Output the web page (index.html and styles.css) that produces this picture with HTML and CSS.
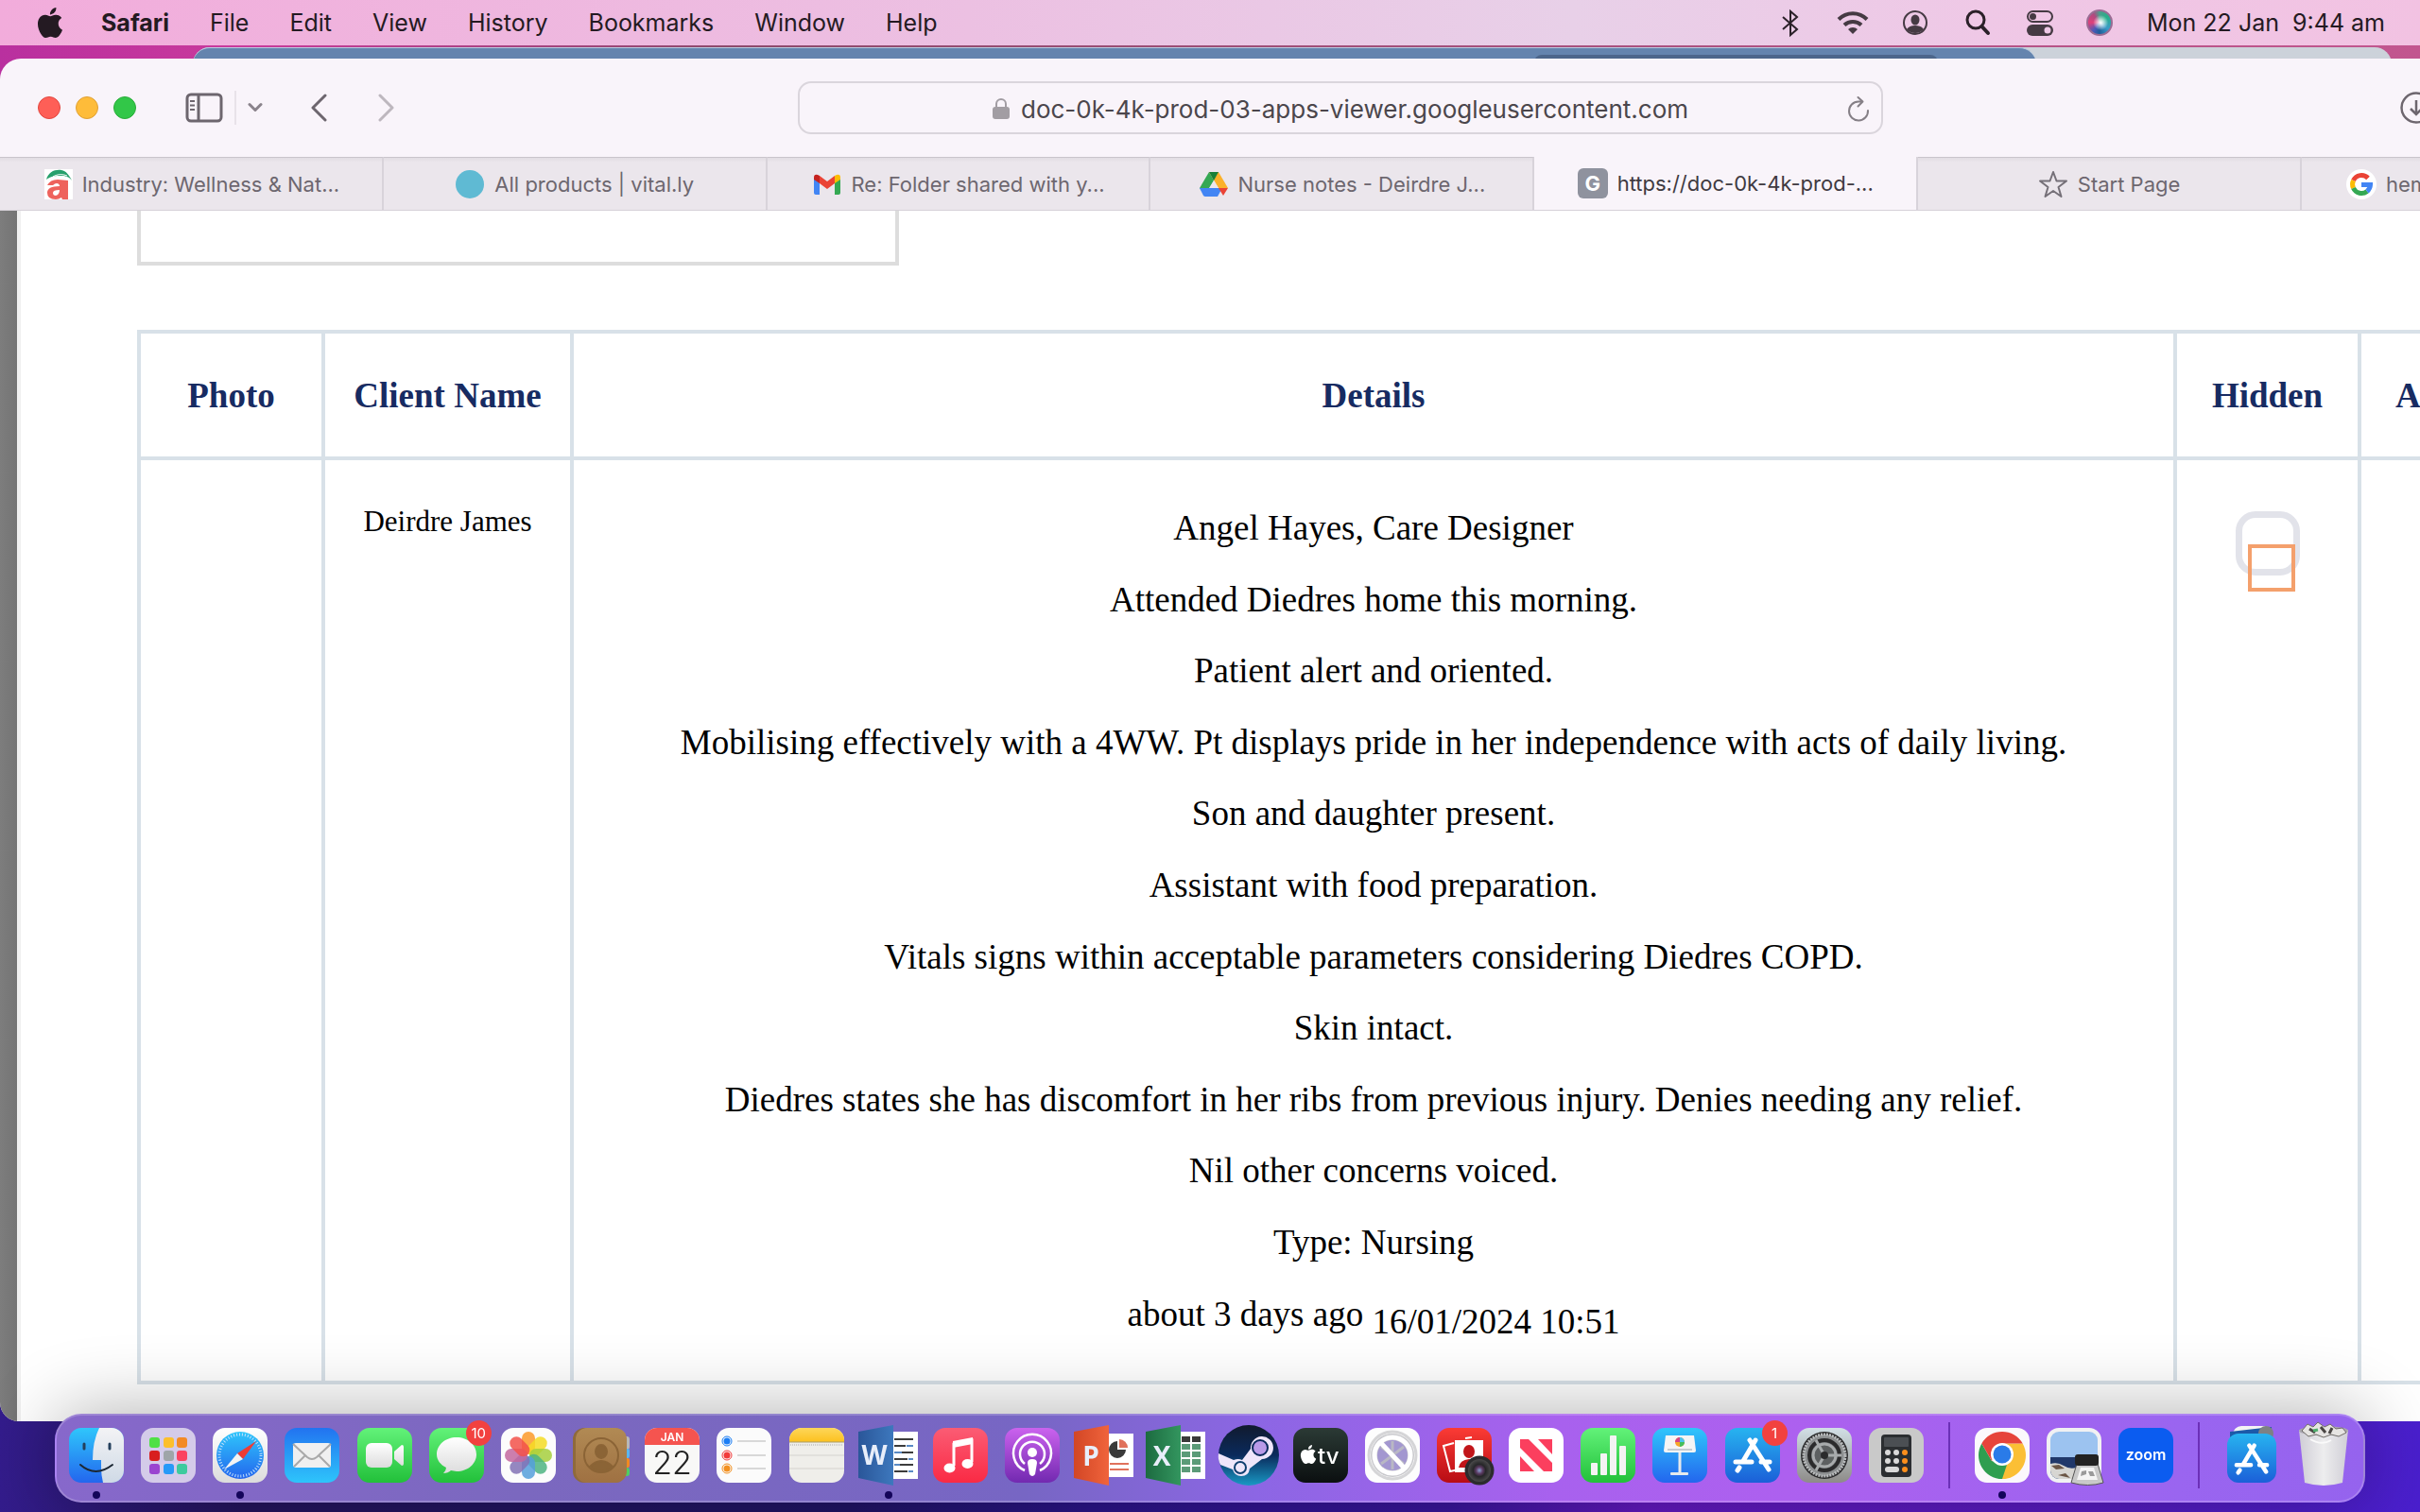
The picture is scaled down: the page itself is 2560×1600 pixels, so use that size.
FILE: index.html
```html
<!DOCTYPE html>
<html lang="en">
<head>
    <meta charset="UTF-8">
    <meta name="viewport" content="width=device-width, initial-scale=1.0">
    <title>Nurse notes</title>
    <link rel="stylesheet" href="styles.css">
</head>
<body>
    <!-- Shared gradients and symbols -->
    <svg class="defs" aria-hidden="true">
        <defs>
            <linearGradient id="blueDown" x2="0" y2="1"><stop offset="0" stop-color="#2fc6fb"/><stop offset="1" stop-color="#2366ee"/></linearGradient>
            <linearGradient id="blueUp" x2="0" y2="1"><stop offset="0" stop-color="#2273f0"/><stop offset="1" stop-color="#2ec5fb"/></linearGradient>
            <linearGradient id="storeBlue" x2="0" y2="1"><stop offset="0" stop-color="#27b4f0"/><stop offset="1" stop-color="#1b5fd8"/></linearGradient>
            <linearGradient id="green" x2="0" y2="1"><stop offset="0" stop-color="#62f279"/><stop offset="1" stop-color="#22c03a"/></linearGradient>
            <linearGradient id="white" x2="0" y2="1"><stop offset="0" stop-color="#ffffff"/><stop offset="1" stop-color="#dcdcdc"/></linearGradient>
            <linearGradient id="face" x2="0" y2="1"><stop offset="0" stop-color="#f3f3f5"/><stop offset="1" stop-color="#cfdae6"/></linearGradient>
            <linearGradient id="pink" x2="0" y2="1"><stop offset="0" stop-color="#fb5c74"/><stop offset="1" stop-color="#fa2a44"/></linearGradient>
            <linearGradient id="purple" x2="0" y2="1"><stop offset="0" stop-color="#cb63ee"/><stop offset="1" stop-color="#7229b0"/></linearGradient>
            <linearGradient id="red" x2="0" y2="1"><stop offset="0" stop-color="#fb3b35"/><stop offset="1" stop-color="#b80c14"/></linearGradient>
            <linearGradient id="black" x2="0" y2="1"><stop offset="0" stop-color="#2b3a35"/><stop offset="1" stop-color="#0b0f10"/></linearGradient>
            <linearGradient id="steam" x2="0" y2="1"><stop offset="0" stop-color="#111a2e"/><stop offset=".5" stop-color="#0a2a5c"/><stop offset="1" stop-color="#1999c4"/></linearGradient>
            <linearGradient id="brown" x2="0" y2="1"><stop offset="0" stop-color="#b18a54"/><stop offset="1" stop-color="#9f7142"/></linearGradient>
            <linearGradient id="yellow" x2="0" y2="1"><stop offset="0" stop-color="#fdd65a"/><stop offset="1" stop-color="#fcc11e"/></linearGradient>
            <linearGradient id="word" x2="1" y2="0"><stop offset="0" stop-color="#2a5699"/><stop offset="1" stop-color="#3d78bd"/></linearGradient>
            <linearGradient id="ppt" x2="1" y2="0"><stop offset="0" stop-color="#d24625"/><stop offset="1" stop-color="#f0643c"/></linearGradient>
            <linearGradient id="excel" x2="1" y2="0"><stop offset="0" stop-color="#1c6b40"/><stop offset="1" stop-color="#33965f"/></linearGradient>
            <linearGradient id="grey" x2="0" y2="1"><stop offset="0" stop-color="#d2e0e6"/><stop offset="1" stop-color="#8d8b88"/></linearGradient>
            <linearGradient id="bin" x2="1" y2="0"><stop offset="0" stop-color="#cfcdd6"/><stop offset=".5" stop-color="#ededee"/><stop offset="1" stop-color="#d0ced6"/></linearGradient>
            <radialGradient id="lens"><stop offset="0" stop-color="#8aa0d0"/><stop offset=".3" stop-color="#5b3a62"/><stop offset=".55" stop-color="#262628"/><stop offset="1" stop-color="#4a4a4a"/></radialGradient>
        </defs>
        <symbol id="apple" viewBox="0 0 24 24"><path d="M12.152 6.896c-.948 0-2.415-1.078-3.96-1.04-2.04.027-3.91 1.183-4.961 3.014-2.117 3.675-.546 9.103 1.519 12.09 1.013 1.454 2.208 3.09 3.792 3.039 1.52-.065 2.09-.987 3.935-.987 1.831 0 2.35.987 3.96.948 1.637-.026 2.676-1.48 3.676-2.948 1.156-1.688 1.636-3.325 1.662-3.415-.039-.013-3.182-1.221-3.22-4.857-.026-3.04 2.48-4.494 2.597-4.559-1.429-2.09-3.623-2.324-4.39-2.376-2-.156-3.675 1.09-4.61 1.09zM15.53 3.83c.843-1.012 1.4-2.427 1.245-3.83-1.207.052-2.662.805-3.532 1.818-.78.896-1.454 2.338-1.273 3.714 1.338.104 2.715-.688 3.559-1.701"/></symbol>
        <symbol id="storeA" viewBox="0 0 58 58"><g stroke="#fff" stroke-width="5" stroke-linecap="round" fill="none"><path d="M26 13L46 44M32 13L19 35M15 42l-2 3M11 36h17M38 36h9"/></g></symbol>
    </svg>

    <header class="menubar">
        <nav class="menus">
            <button class="apple-btn" aria-label="Apple menu"><svg width="32" height="32" fill="#241a22"><use href="#apple"/></svg></button>
            <button class="app-name">Safari</button>
            <button>File</button>
            <button>Edit</button>
            <button>View</button>
            <button>History</button>
            <button>Bookmarks</button>
            <button>Window</button>
            <button>Help</button>
        </nav>
        <div class="status">
            <button aria-label="Bluetooth"><svg width="34" height="34" viewBox="0 0 34 34" fill="none" stroke="#2b2129" stroke-width="2"><path d="M9 11l15 13-7 6V5l7 6L9 24"/></svg></button>
            <button aria-label="Wi-Fi"><svg width="34" height="34" viewBox="0 0 34 34" fill="none" stroke="#453a43" stroke-width="4"><path d="M2 13.500a21 21 0 0 1 30 0M8 19.500a13 13 0 0 1 18 0"/><path d="M17 29l-5-5a7 7 0 0 1 10 0z" fill="#453a43" stroke="none"/></svg></button>
            <button aria-label="User"><svg width="34" height="34" viewBox="0 0 34 34"><circle cx="17" cy="17" r="12" fill="none" stroke="#453a43" stroke-width="2"/><ellipse cx="17" cy="14" rx="4.500" ry="5.500" fill="#453a43"/><path d="M8 24a10 7 0 0 1 18 0a12 12 0 0 1-18 0z" fill="#453a43"/></svg></button>
            <button aria-label="Search"><svg width="34" height="34" viewBox="0 0 34 34" fill="none" stroke="#2b2129"><circle cx="15" cy="14" r="9" stroke-width="3"/><path d="M21.500 21l6.500 7" stroke-width="4" stroke-linecap="round"/></svg></button>
            <button aria-label="Control Centre"><svg width="34" height="34" viewBox="0 0 34 34"><rect x="4" y="5" width="26" height="11" rx="5.500" fill="none" stroke="#453a43" stroke-width="2"/><circle cx="9.500" cy="10.500" r="3.500" fill="#453a43"/><rect x="3" y="19" width="28" height="12" rx="6" fill="#453a43"/><circle cx="25" cy="25" r="3.500" fill="#efc8e6"/></svg></button>
            <button aria-label="Siri"><span class="siri"></span></button>
            <time class="clock">Mon 22 Jan&nbsp; 9:44 am</time>
        </div>
    </header>

    <div class="behind" aria-hidden="true">
        <div class="behind-grey"><div class="behind-blue"><span></span></div></div>
    </div>

    <main class="window">
        <div class="toolbar">
            <div class="lights">
                <button class="light red" aria-label="Close"></button>
                <button class="light amber" aria-label="Minimise"></button>
                <button class="light green" aria-label="Zoom"></button>
            </div>
            <div class="side-btns">
                <button aria-label="Sidebar"><svg width="40" height="32" viewBox="0 0 40 32" fill="none" stroke="#6d666e" stroke-width="3"><rect x="2" y="2" width="36" height="28" rx="4"/><path d="M14 2v28"/><path d="M5 9h5M5 13.500h5M5 18h5" stroke-width="2"/></svg></button>
                <span class="rule"></span>
                <button aria-label="Tab groups"><svg width="16" height="12" viewBox="0 0 16 12" fill="none" stroke="#8a838b" stroke-width="3" stroke-linecap="round" stroke-linejoin="round"><path d="M2 2.500l6 6 6-6"/></svg></button>
            </div>
            <div class="history">
                <button aria-label="Back"><svg width="18" height="30" viewBox="0 0 18 30" fill="none" stroke="#6d666e" stroke-width="3" stroke-linecap="round" stroke-linejoin="round"><path d="M16 2L3 15l13 13"/></svg></button>
                <button aria-label="Forward"><svg width="18" height="30" viewBox="0 0 18 30" fill="none" stroke="#bdb7be" stroke-width="3" stroke-linecap="round" stroke-linejoin="round"><path d="M2 2l13 13L2 28"/></svg></button>
            </div>
            <div class="address">
                <svg width="18" height="24" viewBox="0 0 18 24"><path d="M4 11V7a5 5 0 0 1 10 0v4" fill="none" stroke="#a29da3" stroke-width="2"/><rect y="10" width="18" height="13" rx="3" fill="#a29da3"/></svg>
                <input type="text" class="url" aria-label="Address" value="doc-0k-4k-prod-03-apps-viewer.googleusercontent.com">
                <button class="reload" aria-label="Reload"><svg width="24" height="28" viewBox="0 0 24 28" fill="none" stroke="#857f86" stroke-width="2" stroke-linecap="round" stroke-linejoin="round"><path d="M22 16A10 10 0 1 1 12 6.500h4M11.500 2l5 4.500-5 5"/></svg></button>
            </div>
            <button class="download" aria-label="Downloads"><svg width="34" height="34" viewBox="0 0 34 34" fill="none" stroke="#6d666e" stroke-width="2.500"><circle cx="17" cy="17" r="15.500"/><path d="M17 9v15M11 18l6 6 6-6"/></svg></button>
        </div>

        <nav class="tabs">
            <button class="tab">
                <svg width="32" height="32" viewBox="0 0 32 32"><rect x="2" width="30" height="32" fill="#fff"/><path d="M4 11C6 3 13 0 20 1c5 1 8 5 11 11-4-5-8-5-12-5S9 7 4 11z" fill="#27a06c"/><path d="M11 8c5-3 10-3 15-1" stroke="#fff" stroke-width="1" fill="none"/><path fill-rule="evenodd" d="M5 17q3-6 11-6l11 1v20h-6l-1-2q-3 2-6 2-9 0-9-7 0-7 13-7v-1q-1-2-3-2t-4 2zM18 22q-7 0-7 3t3 3q4-1 4-6z" fill="#ee625c"/></svg>
                <span>Industry: Wellness &amp; Nat...</span>
            </button>
            <button class="tab">
                <svg width="32" height="32" viewBox="0 0 32 32"><circle cx="16" cy="16" r="15" fill="#5fbad3"/></svg>
                <span>All products | vital.ly</span>
            </button>
            <button class="tab">
                <svg width="32" height="32" viewBox="0 0 32 32"><path d="M2 9l6 4v14H4q-2 0-2-2z" fill="#4285f4"/><path d="M30 9l-6 4v14h4q2 0 2-2z" fill="#34a853"/><path d="M8 7l8 6 8-6v8l-8 6-8-6z" fill="#ea4335"/><path d="M2 9q0-4 4-3l2 1v8l-6-4z" fill="#c5221f"/><path d="M30 9q0-4-4-3l-2 1v8l6-4z" fill="#fbbc04"/></svg>
                <span>Re: Folder shared with y...</span>
            </button>
            <button class="tab">
                <svg width="32" height="32" viewBox="0 0 32 32"><path d="M11 3l5 9-9 16-6-8z" fill="#34a853"/><path d="M21 3l10 17H21l-10-17z" fill="#fbb12a"/><path d="M11 3h10l-5 9z" fill="#188038"/><path d="M16 12l5 8H11z" fill="#ebe6ec"/><path d="M1 20h24l-5 9H7q-1 0-2-1z" fill="#4285f4"/><path d="M21 20h10l-5 8z" fill="#ea4335"/></svg>
                <span>Nurse notes - Deirdre J...</span>
            </button>
            <button class="tab active">
                <i class="letter">G</i>
                <span>https://doc-0k-4k-prod-...</span>
            </button>
            <button class="tab">
                <svg width="32" height="32" viewBox="0 0 32 32" fill="none" stroke="#757078" stroke-width="2" stroke-linejoin="round"><path d="M16 3l3.500 9.500H30l-8.500 6.500 3 10-8.500-6-8.500 6 3-10L2 12.500h10.500z"/></svg>
                <span>Start Page</span>
            </button>
            <button class="tab last">
                <svg width="32" height="32" viewBox="0 0 32 32" fill="none" stroke-width="5"><circle cx="16" cy="16" r="16" fill="#fff"/><path d="M23 9.500A9.500 9.500 0 0 0 7.500 12" stroke="#ea4335"/><path d="M7.500 12a9.500 9.500 0 0 0 0 8" stroke="#fbbc04"/><path d="M7.500 20A9.500 9.500 0 0 0 22 23.500" stroke="#34a853"/><path d="M22 23.500a9.500 9.500 0 0 0 3.500-7H16" stroke="#4285f4"/></svg>
                <span>hem</span>
            </button>
        </nav>

        <section class="viewer">
            <div class="page">
                <div class="empty-box"></div>
                <table class="notes">
                    <colgroup>
                        <col class="col-photo"><col class="col-name"><col><col class="col-hidden"><col class="col-hidden">
                    </colgroup>
                    <thead>
                        <tr>
                            <th>Photo</th>
                            <th>Client Name</th>
                            <th>Details</th>
                            <th>Hidden</th>
                            <th class="cut">A</th>
                        </tr>
                    </thead>
                    <tbody>
                        <tr>
                            <td></td>
                            <td class="client">Deirdre James</td>
                            <td>
                                <div class="details">
                                    <p>Angel Hayes, Care Designer</p>
                                    <p>Attended Diedres home this morning.</p>
                                    <p>Patient alert and oriented.</p>
                                    <p>Mobilising effectively with a 4WW. Pt displays pride in her independence with acts of daily living.</p>
                                    <p>Son and daughter present.</p>
                                    <p>Assistant with food preparation.</p>
                                    <p>Vitals signs within acceptable parameters considering Diedres COPD.</p>
                                    <p>Skin intact.</p>
                                    <p>Diedres states she has discomfort in her ribs from previous injury. Denies needing any relief.</p>
                                    <p>Nil other concerns voiced.</p>
                                    <p>Type: Nursing</p>
                                    <p>about 3 days ago <time>16/01/2024 10:51</time></p>
                                </div>
                            </td>
                            <td>
                                <label class="check"><input type="checkbox" aria-label="Hidden"><span></span></label>
                            </td>
                            <td></td>
                        </tr>
                    </tbody>
                </table>
            </div>
        </section>
    </main>

    <footer class="dock">
        <div class="apps">
            <button class="app open" aria-label="Finder"><svg viewBox="0 0 58 58"><rect width="58" height="58" rx="13" fill="url(#blueDown)"/><path d="M32 0h13a13 13 0 0 1 13 13v32a13 13 0 0 1-13 13h-9q-2-8-2-17v-7h-9Q25 14 32 0z" fill="url(#face)"/><path d="M16 17v5M43 17v5" stroke="#24405c" stroke-width="3" stroke-linecap="round"/><path d="M12 39q16 14 34 0" stroke="#1c2733" stroke-width="2" fill="none" stroke-linecap="round"/></svg></button>
            <button class="app" aria-label="Launchpad"><svg viewBox="0 0 58 58"><rect width="58" height="58" rx="13" fill="#d4cbe9"/><rect x="9" y="10" width="11" height="11" rx="3" fill="#4fe045"/><rect x="24" y="10" width="11" height="11" rx="3" fill="#fcbf2c"/><rect x="38" y="10" width="11" height="11" rx="3" fill="#f38a25"/><rect x="9" y="24" width="11" height="11" rx="3" fill="#d81f1f"/><rect x="24" y="24" width="11" height="11" rx="3" fill="#9fa5a8"/><rect x="38" y="24" width="11" height="11" rx="3" fill="#fb4260"/><rect x="9" y="38" width="11" height="11" rx="3" fill="#9a44d0"/><rect x="24" y="38" width="11" height="11" rx="3" fill="#2799f8"/><rect x="38" y="38" width="11" height="11" rx="3" fill="#3dcb9e"/></svg></button>
            <button class="app open" aria-label="Safari"><svg viewBox="0 0 58 58"><rect width="58" height="58" rx="13" fill="url(#white)"/><circle cx="29" cy="29" r="25" fill="url(#blueDown)"/><circle cx="29" cy="29" r="22" fill="none" stroke="#c3e2fb" stroke-width="3" stroke-dasharray="1 2"/><path d="M46 14L32 33l-6-6z" fill="#ee3b34"/><path d="M12 44l14-17 6 6z" fill="#f4f4f4"/></svg></button>
            <button class="app" aria-label="Mail"><svg viewBox="0 0 58 58"><rect width="58" height="58" rx="13" fill="url(#blueUp)"/><rect x="9" y="16" width="40" height="26" rx="3" fill="#f0f0f0"/><path d="M9 17l15 14q5 4 10 0l15-14M10 41l12-12M48 41L36 29" fill="none" stroke="#a9a9a9" stroke-width="2"/></svg></button>
            <button class="app" aria-label="FaceTime"><svg viewBox="0 0 58 58"><rect width="58" height="58" rx="13" fill="url(#green)"/><rect x="9" y="16" width="28" height="26" rx="6" fill="url(#white)"/><path d="M39 25l8-7q2 0 2 2v18q0 2-2 2l-8-7z" fill="url(#white)"/></svg></button>
            <button class="app" aria-label="Messages"><svg viewBox="0 0 58 58"><rect width="58" height="58" rx="13" fill="url(#green)"/><path d="M29 10c12 0 21 8 21 18s-9 18-21 18l-6-1q-3 3-8 3 3-3 3-6C12 39 8 34 8 28c0-10 9-18 21-18z" fill="url(#white)"/></svg><span class="badge">10</span></button>
            <button class="app" aria-label="Photos"><svg viewBox="0 0 58 58"><rect width="58" height="58" rx="13" fill="#fcfcfc"/><g fill-opacity=".85"><rect x="22" y="4" width="14" height="24" rx="7" fill="#fb9a2a"/><rect x="22" y="4" width="14" height="24" rx="7" fill="#f4dc25" transform="rotate(45 29 29)"/><rect x="22" y="4" width="14" height="24" rx="7" fill="#a6cf3d" transform="rotate(90 29 29)"/><rect x="22" y="4" width="14" height="24" rx="7" fill="#4db481" transform="rotate(135 29 29)"/><rect x="22" y="4" width="14" height="24" rx="7" fill="#559fda" transform="rotate(180 29 29)"/><rect x="22" y="4" width="14" height="24" rx="7" fill="#8272b5" transform="rotate(225 29 29)"/><rect x="22" y="4" width="14" height="24" rx="7" fill="#c3679f" transform="rotate(270 29 29)"/><rect x="22" y="4" width="14" height="24" rx="7" fill="#f2514a" transform="rotate(315 29 29)"/></g></svg></button>
            <button class="app" aria-label="Contacts"><svg viewBox="0 0 58 58"><rect x="41" y="9" width="19" height="14" rx="3" fill="#b8b8b8"/><rect x="41" y="22" width="19" height="10" rx="2" fill="#59b7f0"/><rect x="41" y="32" width="19" height="10" rx="2" fill="#f28a20"/><rect x="41" y="42" width="19" height="9" rx="3" fill="#4fcf62"/><rect width="56" height="58" rx="12" fill="#8f6a3c"/><rect x="3" width="54" height="58" rx="12" fill="url(#brown)"/><g stroke="#8b6436" stroke-width="2"><circle cx="30" cy="29" r="18" fill="none"/><ellipse cx="30" cy="25" rx="6" ry="7" fill="#8b6436"/><path d="M18 41q12-12 24 0-12 10-24 0z" fill="#8b6436"/></g></svg></button>
            <button class="app" aria-label="Calendar"><svg viewBox="0 0 58 58"><rect width="58" height="58" rx="13" fill="#f8f8f7"/><path d="M0 18v-5A13 13 0 0 1 13 0h32a13 13 0 0 1 13 13v5z" fill="#f5544f"/><text x="29" y="14" class="cal-month">JAN</text><text x="29" y="49" class="cal-day">22</text></svg></button>
            <button class="app" aria-label="Reminders"><svg viewBox="0 0 58 58"><rect width="58" height="58" rx="13" fill="#fbfbfb"/><path d="M22 14h30M22 29h30M22 43h30" stroke="#b5b5b5" stroke-width="1"/><g fill="none" stroke-width="1"><circle cx="11" cy="14" r="5" stroke="#1a7df5"/><circle cx="11" cy="29" r="5" stroke="#f23b3b"/><circle cx="11" cy="43" r="5" stroke="#f29020"/></g><circle cx="11" cy="14" r="3.500" fill="#1a7df5"/><circle cx="11" cy="29" r="3.500" fill="#f23b3b"/><circle cx="11" cy="43" r="3.500" fill="#f29020"/></svg></button>
            <button class="app" aria-label="Notes"><svg viewBox="0 0 58 58"><rect width="58" height="58" rx="13" fill="#efeeea"/><path d="M0 15v-2A13 13 0 0 1 13 0h32a13 13 0 0 1 13 13v2z" fill="url(#yellow)"/><path d="M0 15h58" stroke="#a99b6a"/><path d="M1 18h56" stroke="#aaa" stroke-dasharray="1 1"/><path d="M0 29h58M0 43h58" stroke="#d4d2ce"/></svg></button>
            <button class="app open" aria-label="Word"><svg class="wide" viewBox="0 0 64 64"><rect x="34" y="7" width="29" height="50" fill="#fff"/><path d="M38 15h20M38 22h12M38 29h20M38 36h14M38 42h20M38 49h14" stroke="#3c3c3c" stroke-width="2"/><path d="M51 22h7M38 29h8M53 36h5M38 42h6M53 49h5" stroke="#5a8ac4" stroke-width="2"/><path d="M0 7L37 0v64L0 56z" fill="url(#word)"/><text x="17" y="42" class="office">W</text></svg></button>
            <button class="app" aria-label="Music"><svg viewBox="0 0 58 58"><rect width="58" height="58" rx="13" fill="url(#pink)"/><path d="M22 40V17l19-4v23" fill="none" stroke="#fff" stroke-width="3"/><path d="M21 14l21-4v7l-21 4z" fill="#fff"/><ellipse cx="17.500" cy="42.500" rx="6" ry="5" fill="#fff"/><ellipse cx="36.500" cy="38" rx="6" ry="5" fill="#fff"/></svg></button>
            <button class="app" aria-label="Podcasts"><svg viewBox="0 0 58 58"><rect width="58" height="58" rx="13" fill="url(#purple)"/><g fill="none" stroke="#fff" stroke-width="2.500"><path d="M21 45a20 20 0 1 1 16 0"/><path d="M21 38a13 13 0 1 1 16 0"/></g><circle cx="29" cy="26" r="5" fill="#fff"/><path d="M24 37q0-4 5-4t5 4l-2 12q-3 4-6 0z" fill="#fff"/></svg></button>
            <button class="app" aria-label="PowerPoint"><svg class="wide" viewBox="0 0 64 64"><rect x="34" y="9" width="29" height="46" fill="#fff"/><path d="M46 17v9h9a9 9 0 1 1-9-9z" fill="#3a3a3a"/><path d="M48 15a9 9 0 0 1 9 9h-9z" fill="#e0725c"/><path d="M38 41h20M38 47h20" stroke="#e0725c" stroke-width="2"/><path d="M0 7L37 0v64L0 56z" fill="url(#ppt)"/><text x="18" y="43" class="office">P</text></svg></button>
            <button class="app" aria-label="Excel"><svg class="wide" viewBox="0 0 64 64"><rect x="34" y="7" width="29" height="50" fill="#fff"/><path d="M38 15h9M49 15h9" stroke="#3a3a3a" stroke-width="6"/><path d="M38 23h9M49 23h9M38 31h9M49 31h9M38 39h9M49 39h9M38 47h9M49 47h9" stroke="#5b9b78" stroke-width="6"/><path d="M0 7L37 0v64L0 56z" fill="url(#excel)"/><text x="17" y="43" class="office">X</text></svg></button>
            <button class="app" aria-label="Steam"><svg class="wide" viewBox="0 0 64 64"><circle cx="32" cy="32" r="32" fill="url(#steam)"/><path d="M0 30l16 7q5-2 9 0l9-12a12 12 0 1 1 12 11L33 46q-1 8-9 8-7 0-9-7L2 42q-3-6-2-12z" fill="#efe6fa"/><circle cx="44" cy="24" r="8" fill="#b99ae8" stroke="#0a2a5c" stroke-width="2"/><circle cx="23" cy="45" r="6" fill="none" stroke="#0f3f70" stroke-width="2"/></svg></button>
            <button class="app" aria-label="TV"><svg viewBox="0 0 58 58"><rect width="58" height="58" rx="13" fill="url(#black)"/><use href="#apple" x="6" y="18" width="20" height="20" fill="#fff"/><text x="26" y="38" class="tv">tv</text></svg></button>
            <button class="app" aria-label="Unsupported app"><svg viewBox="0 0 58 58"><rect width="58" height="58" rx="13" fill="#fdfdfd"/><circle cx="29" cy="29" r="25" fill="none" stroke="#d5d5d7" stroke-width="3"/><circle cx="29" cy="29" r="23" fill="#c8c8cc"/><circle cx="29" cy="29" r="16" fill="#a397d0"/><path d="M29 14v30M17 20l24 18M41 20L17 38" stroke="#b9b8c4" stroke-width="3"/><circle cx="29" cy="29" r="19" fill="none" stroke="#fff" stroke-width="5"/><path d="M16 15l26 28" stroke="#fff" stroke-width="5"/></svg></button>
            <button class="app" aria-label="Photo Booth"><svg class="wide" viewBox="-3 -3 64 64"><rect width="58" height="58" rx="13" fill="url(#red)"/><path d="M18 16L7 19l7 27 9-2" fill="none" stroke="#fff" stroke-width="2"/><path d="M30 11l7-1" stroke="#fff" stroke-width="2"/><rect x="19" y="13" width="30" height="34" fill="#fff"/><ellipse cx="34" cy="25" rx="6" ry="7" fill="#c11519"/><path d="M23 42q1-8 11-9 10 1 11 9z" fill="#c11519"/><circle cx="45" cy="45" r="15.500" fill="#2c2c2e"/><circle cx="45" cy="45" r="12" fill="url(#lens)"/></svg></button>
            <button class="app" aria-label="News"><svg viewBox="0 0 58 58"><rect width="58" height="58" rx="13" fill="#fff"/><path d="M12 12h9l25 25v9h-9L12 21zM31 12h15v16zM12 30l15 16H12z" fill="#fb3f5e"/></svg></button>
            <button class="app" aria-label="Numbers"><svg viewBox="0 0 58 58"><rect width="58" height="58" rx="13" fill="url(#green)"/><g fill="#f3f3f3"><rect x="11" y="37" width="7" height="13" rx="1"/><rect x="21" y="27" width="7" height="23" rx="1"/><rect x="31" y="8" width="7" height="42" rx="1"/><rect x="41" y="19" width="7" height="31" rx="1"/></g></svg></button>
            <button class="app" aria-label="Keynote"><svg viewBox="0 0 58 58"><rect width="58" height="58" rx="13" fill="url(#blueDown)"/><path d="M14 8h30l2 16q0 2-2 2H14q-2 0-2-2z" fill="#f5f5f5"/><path d="M16 23h26" stroke="#98a3ad"/><circle cx="29" cy="15" r="5" fill="#f7a528"/><path d="M29 15v-5a5 5 0 0 1 5 5z" fill="#4cc3ef"/><path d="M29 15h5a5 5 0 0 1-5 5z" fill="#45bf5c"/><path d="M29 15h-5a5 5 0 0 1 5-5z" fill="#d54585"/><path d="M29 26v22" stroke="#e6e9ec" stroke-width="3"/><rect x="19" y="47" width="19" height="3" rx="1" fill="#e6e9ec"/></svg></button>
            <button class="app" aria-label="App Store"><svg viewBox="0 0 58 58"><rect width="58" height="58" rx="13" fill="url(#storeBlue)"/><use href="#storeA"/></svg><span class="badge">1</span></button>
            <button class="app" aria-label="System Preferences"><svg viewBox="0 0 58 58"><rect width="58" height="58" rx="13" fill="url(#grey)"/><circle cx="29" cy="29" r="25" fill="#2b2b2c"/><circle cx="29" cy="29" r="22" fill="#8c8f90" stroke="#b9bcbd" stroke-width="3" stroke-dasharray="2 1"/><circle cx="29" cy="29" r="16" fill="#5d6061" stroke="#2b2b2c" stroke-width="4"/><g stroke="#a8abac" stroke-width="3" fill="none"><circle cx="29" cy="29" r="12"/><path d="M29 29h18M29 29L20 13M29 29l-9 16"/></g><circle cx="29" cy="29" r="4" fill="#2b2b2c"/></svg></button>
            <button class="app" aria-label="Calculator"><svg viewBox="0 0 58 58"><rect width="58" height="58" rx="13" fill="#c9c9c9"/><rect x="13" y="7" width="32" height="45" rx="4" fill="#2b2e31"/><rect x="16" y="10" width="26" height="10" rx="1" fill="#4b4f53"/><g fill="#dadada"><circle cx="20" cy="26" r="3"/><circle cx="29" cy="26" r="3"/><circle cx="20" cy="35" r="3"/><circle cx="29" cy="35" r="3"/><rect x="17" y="41" width="15" height="6" rx="3"/></g><g fill="#fb8f1c"><circle cx="38" cy="26" r="3"/><circle cx="38" cy="35" r="3"/><circle cx="38" cy="44" r="3"/></g></svg></button>
        </div>
        <span class="split"></span>
        <div class="recent">
            <button class="app open" aria-label="Chrome"><svg viewBox="0 0 58 58"><rect width="58" height="58" rx="13" fill="#fbf8fc"/><path d="M29 29L50.650 16.500A25 25 0 0 1 29 54z" fill="#fbbf35"/><path d="M29 54A25 25 0 0 1 7.350 16.500L18 35l16 4z" fill="#2f9e50"/><path d="M29 16.500h21.650L40 29z" fill="#fbbf35"/><path d="M7.350 16.500A25 25 0 0 1 50.650 16.500H29L18 35z" fill="#e6443b"/><circle cx="29" cy="28" r="12" fill="#fff"/><circle cx="29" cy="28" r="9.500" fill="#2a7be8"/></svg></button>
            <button class="app" aria-label="Preview"><svg class="wide" viewBox="-3 -3 64 64"><rect width="58" height="58" rx="13" fill="#f1f1f3"/><rect x="4" y="4" width="50" height="50" rx="9" fill="#9cc3f0"/><path d="M4 31h50v14a9 9 0 0 1-9 9H13a9 9 0 0 1-9-9z" fill="#20386a"/><path d="M4 38q8-2 14 2t14 2v12H13a9 9 0 0 1-9-9z" fill="#d7d6d2"/><path d="M5 40l8-1 6 4-9 1zM12 50l8-2 5 5z" fill="#6b5646"/><path d="M32 38h22l6 20q-16 5-34 0z" fill="#c9c9c9" stroke="#555"/><path d="M36 42h14l4 13H32z" fill="#f4f4f4"/><path d="M37 46l5-1v4l-6 2zM44 46h5l2 5h-5z" fill="#9a9a9a"/><rect x="30" y="28" width="25" height="12" rx="3" fill="#222"/></svg></button>
            <button class="app" aria-label="Zoom"><svg viewBox="0 0 58 58"><rect width="58" height="58" rx="13" fill="#0b5cf0"/><text x="29" y="34" class="zoom">zoom</text></svg></button>
        </div>
        <span class="split"></span>
        <div class="recent">
            <button class="app" aria-label="Applications"><svg viewBox="0 0 58 58"><rect x="9" y="-2" width="42" height="20" rx="9" fill="#f4f4f4"/><path d="M6 4l44-5v18H6z" fill="#1c5aa8"/><circle cx="44" cy="6" r="8" fill="#7d8184"/><rect x="3" y="6" width="52" height="52" rx="12" fill="url(#storeBlue)"/><use href="#storeA" x="3" y="7" width="52" height="52"/></svg></button>
            <button class="app" aria-label="Bin"><svg class="wide" viewBox="-3 -3 64 64"><path d="M3 2h52l-6 56q-20 6-40 0z" fill="url(#bin)"/><ellipse cx="29" cy="3" rx="26" ry="5" fill="#a8a5ae"/><path d="M6 3l6-7 6 3 5-5 7 5 6-3 6 5 7-1 4 5-8 4-8-2-8 3-8-3-8 2z" fill="#e6e4e2" stroke="#706c68"/><path d="M14 1l6 4M26-1l5 6M38 0l-3 6" stroke="#4a4644" stroke-width="3"/><path d="M18 3l5-1" stroke="#4fae6c" stroke-width="3"/><path d="M15 12q12 7 22 1" stroke="#fafafa" stroke-width="2" fill="none"/></svg></button>
        </div>
    </footer>
</body>
</html>
```

FILE: styles.css
```css
* {
    box-sizing: border-box;
}
body {
    display: flex;
    flex-direction: column;
    height: 100vh;
    margin: 0;
    overflow: hidden;
    font-family: Inter, "Liberation Sans", sans-serif;
    background:
        linear-gradient(90deg, #b9309f, #c93a9c 10%, #8d4a6c 30%, #c2568f) top / 100% 200px no-repeat,
        linear-gradient(90deg, #331c8c, #25155f 10%, #201566 35%, #2b148a 45%, #3a169e 60%, #6419c2 68%, #5a1cc4 85%, #4a1fce);
}
button {
    padding: 0;
    border: none;
    background: none;
    color: inherit;
    font: inherit;
}
button svg {
    display: block;
    flex: none;
}
.defs {
    position: absolute;
    width: 0;
    height: 0;
}

/* Menu bar */
.menubar {
    display: flex;
    justify-content: space-between;
    align-items: center;
    height: 48px;
    padding: 0 37px;
    flex: none;
    background: linear-gradient(90deg, #f2acdb, #ecc0e2 40%, #e8d0e8 65%, #efc8e6 82%, #f2c2e2);
    color: #241a22;
    font-size: 25px;
}
.menus {
    display: flex;
    align-items: center;
    gap: 43px;
}
.apple-btn svg {
    margin-right: -5px;
}
.app-name {
    font-weight: 700;
}
.status {
    display: flex;
    align-items: center;
    gap: 32px;
}
.siri {
    display: block;
    width: 28px;
    height: 28px;
    border-radius: 50%;
    background:
        radial-gradient(circle at 55% 50%, #fff 0, rgba(255, 255, 255, 0.7) 15%, transparent 45%),
        conic-gradient(#4a9f8c, #26b08a 15%, #3a9bc8 35%, #1f5f9a 50%, #4a5ab8 60%, #e0407a 75%, #b04a80 90%, #4a9f8c);
    border: 2px solid #9a6c94;
}
.clock {
    margin-left: 4px;
    white-space: nowrap;
}

/* Windows peeking out above Safari */
.behind {
    height: 14px;
    flex: none;
    padding: 2px 30px 0 204px;
}
.behind-grey {
    height: 40px;
    border-radius: 18px;
    background: #ccd2da;
}
.behind-blue {
    display: flex;
    justify-content: flex-end;
    height: 40px;
    margin-right: 376px;
    padding: 7px 104px 0 0;
    border-top: 1px solid #b9cbe0;
    border-radius: 18px;
    background: #6484ae;
}
.behind-blue span {
    width: 427px;
    border-radius: 8px;
    background: #4c668b;
}

/* Safari window */
.window {
    position: relative;
    display: flex;
    flex-direction: column;
    flex: 1;
    min-height: 0;
    margin-bottom: 96px;
    overflow: hidden;
    border-radius: 22px 0 0 20px;
    background: #f9f4fa;
}
.toolbar {
    display: flex;
    align-items: center;
    height: 104px;
    flex: none;
    padding-left: 40px;
}
.lights {
    display: flex;
    gap: 16px;
    margin-right: 52px;
}
.light {
    width: 24px;
    height: 24px;
    border-radius: 50%;
}
.light.red {
    background: #fe5f57;
    border: 1px solid #e2463f;
}
.light.amber {
    background: #febc3a;
    border: 1px solid #e0a034;
}
.light.green {
    background: #32c748;
    border: 1px solid #28ac38;
}
.side-btns {
    display: flex;
    align-items: center;
    gap: 12px;
    margin-right: 50px;
}
.rule {
    width: 2px;
    height: 36px;
    background: #e8e2e9;
}
.history {
    display: flex;
    gap: 54px;
}
.address {
    display: flex;
    justify-content: center;
    align-items: center;
    gap: 12px;
    position: relative;
    flex: 1;
    height: 56px;
    margin-left: 426px;
    padding-top: 2px;
    border: 2px solid #dad5dc;
    border-radius: 14px;
}
.url {
    field-sizing: content;
    padding: 0;
    border: none;
    outline: none;
    background: none;
    color: #4b464c;
    font-family: inherit;
    font-size: 26px;
}
.reload {
    position: absolute;
    right: 12px;
}
.download {
    width: 21px;
    margin-left: 547px;
    overflow: hidden;
}

/* Tabs */
.tabs {
    display: flex;
    height: 57px;
    flex: none;
    border-bottom: 1px solid #d6d1d8;
    color: #6d676f;
    font-size: 22px;
}
.tab {
    display: flex;
    justify-content: center;
    align-items: center;
    gap: 10px;
    flex: 1;
    border-top: 1px solid #c9c4cb;
    border-right: 2px solid #d8d3da;
    background: linear-gradient(#e2dde3, #ebe6ec 5px);
    white-space: nowrap;
}
.tab.active {
    border-top: none;
    background: none;
    color: #3f3a41;
}
.tab.last {
    flex: 0 0 125px;
    justify-content: flex-start;
    padding-left: 47px;
    border-right: none;
    overflow: hidden;
}
.letter {
    width: 32px;
    border-radius: 6px;
    background: #8f929e;
    color: #fff;
    font-style: normal;
    font-weight: 700;
    line-height: 32px;
    text-align: center;
}

/* Document */
.viewer {
    flex: 1;
    min-height: 0;
    padding-left: 18px;
    overflow: hidden;
    background: linear-gradient(90deg, #7d7d7d, #747474 18px);
    font-family: "Liberation Serif", serif;
}
.page {
    height: 100%;
    padding-left: 123px;
    border-left: 4px solid #f0f0f0;
    background: #fff;
}
.empty-box {
    width: 806px;
    height: 58px;
    margin-bottom: 68px;
    border: 4px solid #ddd;
    border-top: none;
}
.notes {
    width: calc(100% + 133px);
    table-layout: fixed;
    border-collapse: collapse;
    font-size: 37px;
}
.col-photo {
    width: 195px;
}
.col-name {
    width: 263px;
}
.col-hidden {
    width: 195px;
}
.notes th,
.notes td {
    padding: 0;
    border: 4px solid #d8e1e8;
    text-align: center;
    vertical-align: top;
}
.notes th {
    height: 134px;
    color: #172b62;
    vertical-align: middle;
}
.notes .cut {
    padding-left: 36px;
    text-align: left;
}
.notes .client {
    padding-top: 47px;
    font-size: 31px;
}
.details {
    display: flex;
    flex-direction: column;
    justify-content: space-between;
    height: 880px;
    margin: 50px 0 44px;
}
.details p {
    margin: 0;
    line-height: 43px;
}
.details time {
    vertical-align: sub;
    line-height: 1;
}
.check {
    display: inline-block;
    position: relative;
    margin-top: 54px;
}
.check input {
    display: block;
    width: 68px;
    height: 68px;
    margin: 0;
    appearance: none;
    border: 7px solid #e2e3ea;
    border-radius: 21px;
}
.check span {
    position: absolute;
    top: 35px;
    left: 13px;
    width: 50px;
    height: 50px;
    border: 4px solid #f4a06c;
}

/* Dock */
.dock {
    display: flex;
    align-items: center;
    gap: 26px;
    position: fixed;
    right: 58px;
    bottom: 10px;
    left: 58px;
    height: 94px;
    padding: 0 13px 6px;
    border: 2px solid rgba(255, 255, 255, 0.2);
    border-radius: 28px;
    background: linear-gradient(90deg, #8768cb, #7b68bf 20%, #7766c4 42%, #8c66e4 52%, #a861ee 65%, #ad60ef 75%, #9a65f0 92%, #9563ee);
    background-clip: border-box;
    box-shadow: 0 0 80px rgba(0, 0, 0, 0.32);
}
.apps {
    display: flex;
    justify-content: space-between;
    flex: 1;
}
.recent {
    display: flex;
    gap: 18px;
}
.split {
    width: 2px;
    height: 70px;
    background: #6c30b8;
}
.app {
    position: relative;
    width: 58px;
    height: 58px;
}
.app svg {
    width: 58px;
    height: 58px;
    overflow: visible;
}
.app svg.wide {
    width: 64px;
    height: 64px;
    margin: -3px;
}
.app.open::after {
    content: "";
    position: absolute;
    bottom: -17px;
    left: 25px;
    width: 8px;
    height: 8px;
    border-radius: 50%;
    background: #14055a;
}
.badge {
    position: absolute;
    top: -8px;
    right: -8px;
    width: 27px;
    border-radius: 50%;
    background: #f2413f;
    color: #fff;
    font-size: 15px;
    line-height: 27px;
    text-align: center;
}
.cal-month {
    fill: #fff;
    font-size: 12px;
    font-weight: 600;
    text-anchor: middle;
}
.cal-day {
    fill: #222;
    font-size: 34px;
    font-weight: 300;
    text-anchor: middle;
}
.office {
    fill: #e8eefa;
    font-size: 28px;
    font-weight: 700;
    font-family: "Open Sans", sans-serif;
    text-anchor: middle;
}
.tv {
    fill: #fff;
    font-size: 24px;
    font-weight: 500;
}
.zoom {
    fill: #fff;
    font-size: 16px;
    font-weight: 600;
    text-anchor: middle;
}
```
